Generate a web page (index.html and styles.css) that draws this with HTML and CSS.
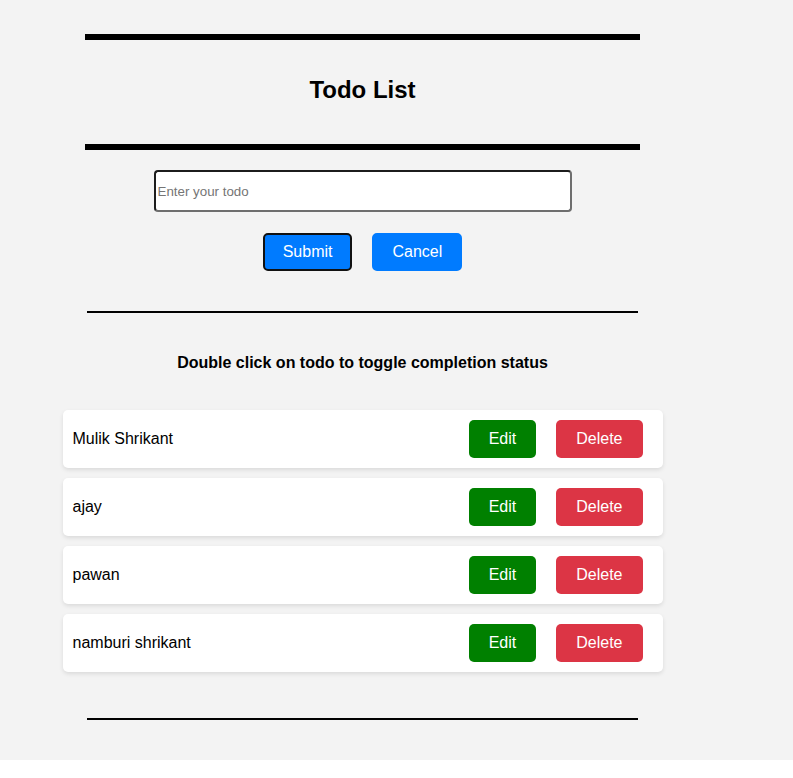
FILE: index.html
```html
<!DOCTYPE html>
<html lang="en">
<head>
<meta charset="utf-8">
<title>Todo List</title>
<link rel="stylesheet" href="styles.css">
</head>
<body>
<div class="app">
  <div class="col">
    <hr class="rule-thick">
    <h1 class="title">Todo List</h1>
    <hr class="rule-thick">
    <form class="todo-form">
      <input class="todo-input" type="text" placeholder="Enter your todo">
      <div class="actions">
        <button type="button" class="btn btn-primary is-focused">Submit</button>
        <button type="button" class="btn btn-primary">Cancel</button>
      </div>
    </form>
    <hr class="rule-thin">
    <p class="hint">Double click on todo to toggle completion status</p>
    <ul class="list">
      <li class="card"><span class="card-text">Mulik Shrikant</span><button class="btn btn-edit">Edit</button><button class="btn btn-delete">Delete</button></li>
      <li class="card"><span class="card-text">ajay</span><button class="btn btn-edit">Edit</button><button class="btn btn-delete">Delete</button></li>
      <li class="card"><span class="card-text">pawan</span><button class="btn btn-edit">Edit</button><button class="btn btn-delete">Delete</button></li>
      <li class="card"><span class="card-text">namburi shrikant</span><button class="btn btn-edit">Edit</button><button class="btn btn-delete">Delete</button></li>
    </ul>
    <hr class="rule-thin rule-bottom">
  </div>
</div>
</body>
</html>
```
FILE: styles.css
```css
html, body {
  margin: 0;
  padding: 0;
  background: #ffffff;
}

body {
  font-family: "Liberation Sans", Arial, sans-serif;
  color: #000;
}

.app {
  background: #f3f3f3;
  padding: 34px 0 40px;
}

.col {
  width: 725px;
  display: flex;
  flex-direction: column;
  align-items: center;
}

.rule-thick,
.rule-thin {
  margin: 0;
  padding: 0;
  border: none;
  background: #000;
}

.rule-thick {
  width: 555px;
  height: 6px;
}

.rule-thin {
  width: 551px;
  height: 2px;
  margin-top: 40px;
}

.rule-bottom {
  margin-top: 46px;
}

.title {
  margin: 36px 0 40px;
  font-size: 24px;
  line-height: 28px;
  font-weight: bold;
}

.todo-form {
  display: flex;
  flex-direction: column;
  align-items: center;
  margin-top: 20px;
}

.todo-input {
  box-sizing: border-box;
  width: 418px;
  height: 42px;
  padding: 1px 2px;
  margin: 0;
  font-family: "Liberation Sans", Arial, sans-serif;
  font-size: 13.33px;
  background: #fff;
  border: 2px solid;
  border-color: #1c1c1c #6e6e6e #6e6e6e #1c1c1c;
  border-radius: 4px;
}

.todo-input::placeholder {
  color: #757575;
}

.actions {
  display: flex;
  margin-top: 21px;
}

.btn {
  font-family: "Liberation Sans", Arial, sans-serif;
  font-size: 16px;
  line-height: 18px;
  color: #fff;
  border: none;
  border-radius: 5px;
  padding: 10px 20px;
  margin: 0 10px;
  cursor: pointer;
}

.btn-primary {
  background: #007bff;
  border: 2px solid #007bff;
  padding: 8px 18px;
}

.btn-primary.is-focused {
  border-color: #111;
}

.hint {
  margin: 41px 0 0;
  font-size: 16px;
  line-height: 18px;
  font-weight: bold;
}

.list {
  list-style: none;
  margin: 38px 0 0;
  padding: 0;
  display: flex;
  flex-direction: column;
  gap: 10px;
}

.card {
  box-sizing: border-box;
  width: 600px;
  display: flex;
  align-items: center;
  background: #fff;
  border-radius: 5px;
  padding: 10px;
  box-shadow: 0 2px 4px rgba(0, 0, 0, 0.1);
}

.card-text {
  flex: 1;
  font-size: 16px;
  line-height: 18px;
}

.btn-edit {
  background: #008000;
}

.btn-delete {
  background: #dc3545;
}
```
